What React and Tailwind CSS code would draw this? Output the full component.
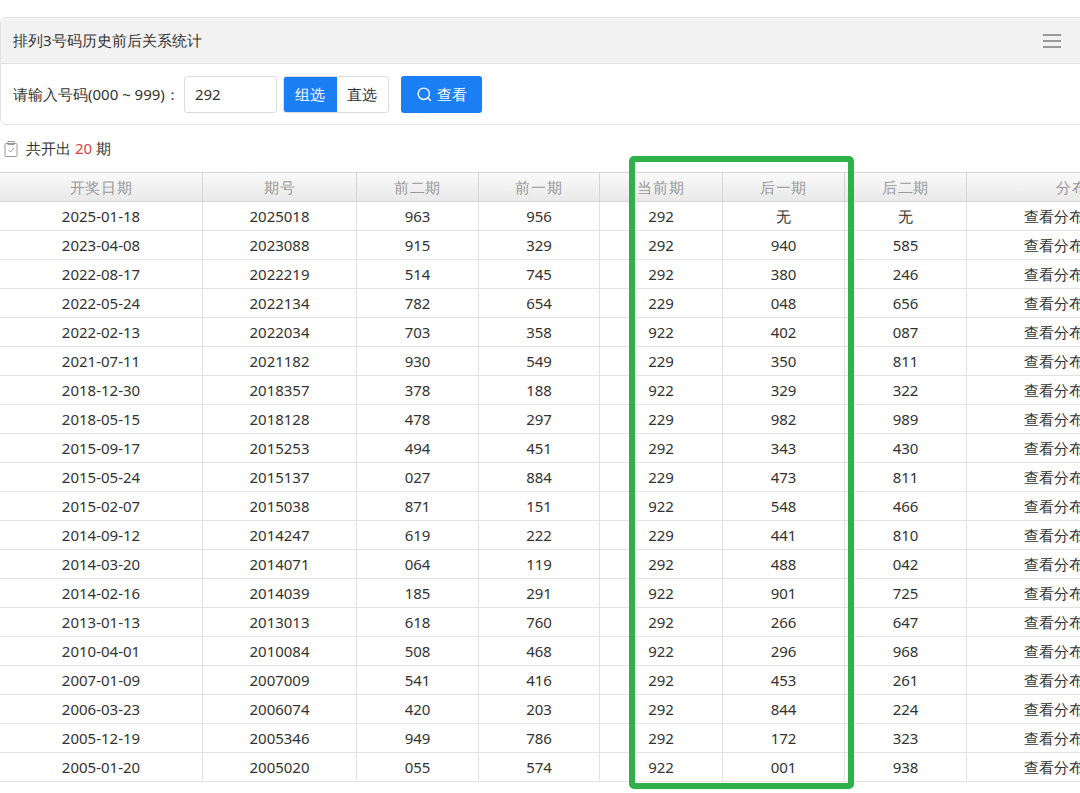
import React from 'react';

const rows = [
  ['2025-01-18','2025018','963','956','292','无','无'],
  ['2023-04-08','2023088','915','329','292','940','585'],
  ['2022-08-17','2022219','514','745','292','380','246'],
  ['2022-05-24','2022134','782','654','229','048','656'],
  ['2022-02-13','2022034','703','358','922','402','087'],
  ['2021-07-11','2021182','930','549','229','350','811'],
  ['2018-12-30','2018357','378','188','922','329','322'],
  ['2018-05-15','2018128','478','297','229','982','989'],
  ['2015-09-17','2015253','494','451','292','343','430'],
  ['2015-05-24','2015137','027','884','229','473','811'],
  ['2015-02-07','2015038','871','151','922','548','466'],
  ['2014-09-12','2014247','619','222','229','441','810'],
  ['2014-03-20','2014071','064','119','292','488','042'],
  ['2014-02-16','2014039','185','291','922','901','725'],
  ['2013-01-13','2013013','618','760','292','266','647'],
  ['2010-04-01','2010084','508','468','922','296','968'],
  ['2007-01-09','2007009','541','416','292','453','261'],
  ['2006-03-23','2006074','420','203','292','844','224'],
  ['2005-12-19','2005346','949','786','292','172','323'],
  ['2005-01-20','2005020','055','574','922','001','938'],
];
const widths = ['w-[203px]','w-[154px]','w-[122px]','w-[121px]','w-[123px]','w-[122px]','w-[122px]','w-[226px]'];
const heads = ['开奖日期','期号','前二期','前一期','当前期','后一期','后二期','分布图'];

export default function App() {
  return (
    <div className="relative w-[1080px] h-[793px] overflow-hidden bg-white text-[#333] font-['Open_Sans','Noto_Sans_CJK_SC',sans-serif]">
      <div className="h-[17px]" />
      <div className="mr-[-10px] border border-[#e2e2e2] rounded-[6px]">
        <div className="h-[46px] bg-[#f2f2f2] border-b border-[#e2e2e2] flex items-center justify-between pl-3 pr-[28px] text-[15px] rounded-t-[6px]">
          <span>排列3号码历史前后关系统计</span>
          <span className="flex flex-col gap-[4px]">
            <span className="block w-[18px] h-[2px] bg-[#999]" />
            <span className="block w-[18px] h-[2px] bg-[#999]" />
            <span className="block w-[18px] h-[2px] bg-[#999]" />
          </span>
        </div>
        <div className="h-[60px] flex items-center pl-3 text-[15px]">
          <span>请输入号码(000 ~ 999)：</span>
          <div className="ml-1 w-[93px] h-[37px] border border-[#ddd] rounded-[3px] flex items-center px-2.5">292</div>
          <div className="ml-[6px] flex h-[37px] border border-[#ddd] rounded-[3px] overflow-hidden">
            <span className="w-[53px] bg-[#1a7ef5] text-white flex items-center justify-center">组选</span>
            <span className="w-[51px] flex items-center justify-center">直选</span>
          </div>
          <button className="ml-[12px] h-[37px] w-[81px] bg-[#1a7ef5] text-white rounded-[3px] flex items-center justify-center gap-1">
            <svg width="17" height="17" viewBox="0 0 24 24" fill="none" stroke="white" strokeWidth="2"><circle cx="11" cy="11" r="8"/><path d="M17 17l4 4"/></svg>
            查看
          </button>
        </div>
      </div>
      <div className="h-[47px] flex items-center pl-1 gap-2 text-[15px]">
        <svg width="14" height="16" viewBox="0 0 14 16" fill="none" stroke="#999" strokeWidth="1"><rect x="1" y="2.5" width="12" height="13" rx="1"/><rect x="4" y="0.5" width="6" height="3"/><path d="M4.5 9l2 2 3.5-4"/></svg>
        <span>共开出 <span className="text-[#d9403b]">20</span> 期</span>
      </div>
      <div className="flex flex-col text-[15px] text-[#333]">
        <div className="flex h-[30px] bg-gradient-to-b from-[#fafafa] to-[#e9e9e9] border-y border-[#d5d5d5] text-[#999]">
          {heads.map((h, i) => (
            <div key={i} className={`${widths[i]} shrink-0 flex items-center justify-center border-r border-[#d5d5d5] tracking-wider`}>{h}</div>
          ))}
        </div>
        {rows.map((r, ri) => (
          <div key={ri} className="flex h-[29px] border-b border-[#e2e2e2]">
            {[...r, '查看分布图'].map((c, i) => (
              <div key={i} className={`${widths[i]} shrink-0 flex items-center justify-center border-r border-[#e2e2e2] ${i === 7 ? 'justify-start pl-[57px]' : ''}`}>{c}</div>
            ))}
          </div>
        ))}
      </div>
      <div className="absolute left-[629px] top-[156px] w-[225px] h-[633px] border-[6px] border-[#2fb14a] rounded-[5px]" />
    </div>
  );
}
